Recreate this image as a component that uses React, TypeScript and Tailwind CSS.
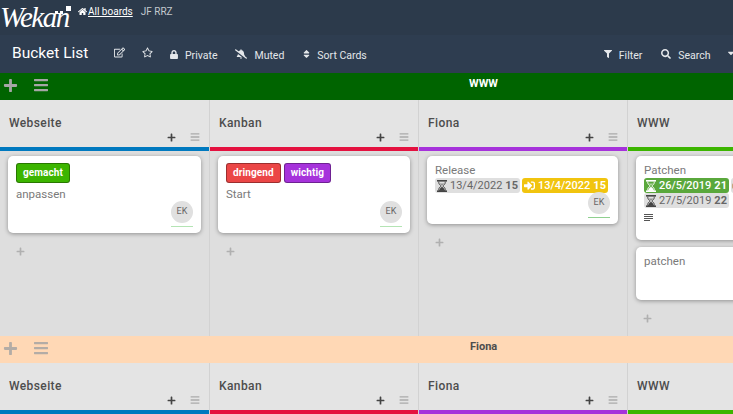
import { FaBars, FaBellSlash, FaCaretDown, FaFilter, FaHome, FaLock, FaPlus, FaRegEdit, FaRegStar, FaSearch, FaSignInAlt, FaSort } from "react-icons/fa";
import { ReactNode } from "react";

type ListProps = {
  title: string;
  stripe: string;
  width: string;
  children?: ReactNode;
  showActions?: boolean;
};

const Hourglass = ({ className }: { className: string }) => (
  <svg viewBox="0 0 10 12" className={`w-[10px] h-[12px] shrink-0 ${className}`} fill="currentColor">
    <rect x="0" y="0" width="10" height="1.6" />
    <rect x="0" y="10.4" width="10" height="1.6" />
    <path d="M1.8 1.6V3C1.8 4.8 4.2 5.3 4.2 6C4.2 6.7 1.8 7.2 1.8 9V10.4H8.2V9C8.2 7.2 5.8 6.7 5.8 6C5.8 5.3 8.2 4.8 8.2 3V1.6" fill="none" stroke="currentColor" strokeWidth="0.9" />
    <path d="M5 6.6C4.4 7.6 2.6 8 2.4 10.4H7.6C7.4 8 5.6 7.6 5 6.6Z" />
    <path d="M2.9 3.4H7.1C6.6 4.4 5.4 4.8 5 5.6C4.6 4.8 3.4 4.4 2.9 3.4Z" opacity="0.5" />
  </svg>
);

const Member = ({ line }: { line: string }) => (
  <div className="absolute right-[8px] bottom-[6px] flex flex-col items-center w-[22px]">
    <div className="w-[22px] h-[22px] rounded-full bg-[#e0e0e0] flex items-center justify-center text-[9px] text-[#666]">EK</div>
    <div className={`h-px w-[22px] mt-[3px] ${line}`} />
  </div>
);

const List = ({ title, stripe, width, children, showActions = true }: ListProps) => (
  <div className={`${width} shrink-0 flex flex-col border-r border-[#d2d2d2]`}>
    <div className="h-[47px] bg-[#e4e4e4] relative">
      <h2 className="pl-[9px] pt-[15px] text-[12px] leading-[16px] font-medium text-[#4d4d4d] tracking-[0.4px]">{title}</h2>
      {showActions && (
        <div className="absolute right-[9px] top-[32px] flex items-center gap-[14px]">
          <FaPlus className="w-[9px] h-[9px] text-[#444]" />
          <FaBars className="w-[10px] h-[10px] text-[#aaa]" />
        </div>
      )}
    </div>
    <div className={`h-[4px] ${stripe}`} />
    {children}
  </div>
);

const Card = ({ children, className }: { children: ReactNode; className: string }) => (
  <div className={`bg-white rounded-[5px] shadow-[0_1px_4px_rgba(0,0,0,0.35)] ${className}`}>{children}</div>
);

const Label = ({ text, color }: { text: string; color: string }) => (
  <span className={`h-[20px] px-[6px] rounded-[3px] border border-[#00000055] text-white text-[10px] tracking-[0.1px] font-bold leading-[18px] ${color}`}>{text}</span>
);

const AddCard = () => <FaPlus className="w-[9px] h-[9px] text-[#b0b0b0] ml-[16px]" />;

const Swimlane = ({ title, bg, text, icons }: { title: string; bg: string; text: string; icons: string }) => (
  <div className={`h-[27px] ${bg} flex items-start relative shrink-0`}>
    <div className={`flex items-center gap-[15px] pl-[3px] pt-[4px] ${icons}`}>
      <FaPlus className="w-[15px] h-[15px]" />
      <FaBars className="w-[16px] h-[16px]" />
    </div>
    <span className={`absolute top-[4px] text-[11px] leading-[14px] font-bold ${text}`}>{title}</span>
  </div>
);

const DateBadge = ({ icon, text, num, className }: { icon: ReactNode; text: string; num: string; className: string }) => (
  <span className={`inline-flex items-center gap-[3px] h-[15px] px-[2px] rounded-[3px] text-[11px] leading-[15px] whitespace-nowrap ${className}`}>
    {icon}
    <span>{text}</span>
    <b className="font-bold">{num}</b>
  </span>
);

const ListsTop = () => (
  <div className="h-[236px] flex bg-[#dedede] overflow-hidden shrink-0">
    <List title="Webseite" stripe="bg-[#0079bf]" width="w-[210px]">
      <Card className="mx-[8px] mt-[5px] h-[77px] px-[8px] pt-[7px] relative">
        <div className="flex"><Label text="gemacht" color="bg-[#3cb500]" /></div>
        <p className="text-[11.5px] leading-[16px] mt-[3px] text-[#7a7a7a]">anpassen</p>
        <Member line="bg-[#b4e4b4]" />
      </Card>
      <div className="mt-[14px]"><AddCard /></div>
    </List>
    <List title="Kanban" stripe="bg-[#e4113f]" width="w-[209px]">
      <Card className="mx-[8px] mt-[5px] h-[77px] px-[8px] pt-[7px] relative">
        <div className="flex gap-[3px]">
          <Label text="dringend" color="bg-[#eb4646]" />
          <Label text="wichtig" color="bg-[#a632db]" />
        </div>
        <p className="text-[11.5px] leading-[16px] mt-[3px] text-[#7a7a7a]">Start</p>
        <Member line="bg-[#b4e4b4]" />
      </Card>
      <div className="mt-[14px]"><AddCard /></div>
    </List>
    <List title="Fiona" stripe="bg-[#a632db]" width="w-[209px]">
      <Card className="ml-[8px] mr-[9px] mt-[5px] h-[68px] px-[8px] pt-[6px] relative">
        <p className="text-[11.5px] leading-[16px] text-[#7a7a7a]">Release</p>
        <div className="flex gap-[2px]">
          <DateBadge className="bg-[#dfdfdf] text-[#666]" icon={<Hourglass className="text-[#444]" />} text="13/4/2022" num="15" />
          <DateBadge className="bg-[#f1c40f] text-white font-medium" icon={<FaSignInAlt className="w-[11px] h-[11px]" />} text="13/4/2022" num="15" />
        </div>
        <Member line="bg-[#8fd08f]" />
      </Card>
      <div className="mt-[14px]"><AddCard /></div>
    </List>
    <List title="WWW" stripe="bg-[#3cb500]" width="w-[209px]" showActions={false}>
      <Card className="ml-[8px] w-[193px] mt-[5px] h-[84px] px-[8px] pt-[6px]">
        <p className="text-[11.5px] leading-[16px] text-[#7a7a7a]">Patchen</p>
        <div className="flex gap-[2px]">
          <DateBadge className="bg-[#5aa83c] text-white font-medium" icon={<Hourglass className="text-white" />} text="26/5/2019" num="21" />
          <span className="w-[10px] h-[15px] rounded-l-[3px] bg-[#dfdfdf] shrink-0 flex items-center pl-[1px]">
            <span className="w-[3px] h-[6px] rounded-l-[2px] bg-[#c9a27a]" />
          </span>
        </div>
        <div className="flex">
          <DateBadge className="bg-[#dfdfdf] text-[#666]" icon={<Hourglass className="text-[#444]" />} text="27/5/2019" num="22" />
        </div>
        <svg width="9" height="8" viewBox="0 0 9 8" className="mt-[6px] text-[#555]" fill="currentColor">
          <rect y="0" width="9" height="1" /><rect y="2" width="9" height="1" /><rect y="4" width="9" height="1" /><rect y="6" width="6" height="1" />
        </svg>
      </Card>
      <Card className="ml-[8px] w-[193px] mt-[7px] h-[53px] px-[8px] pt-[6px]">
        <p className="text-[11.5px] leading-[16px] text-[#7a7a7a]">patchen</p>
      </Card>
      <div className="mt-[14px] -ml-[1px]"><AddCard /></div>
    </List>
  </div>
);

const ListsBottom = () => (
  <div className="flex-1 flex bg-[#dedede] overflow-hidden">
    <List title="Webseite" stripe="bg-[#0079bf]" width="w-[210px]" />
    <List title="Kanban" stripe="bg-[#e4113f]" width="w-[209px]" />
    <List title="Fiona" stripe="bg-[#a632db]" width="w-[209px]" />
    <List title="WWW" stripe="bg-[#3cb500]" width="w-[209px]" showActions={false} />
  </div>
);

const HeaderButton = ({ icon, text, className }: { icon: ReactNode; text: string; className: string }) => (
  <div className={`flex items-center gap-[7px] whitespace-nowrap shrink-0 ${className}`}>
    {icon}
    <span className="text-[10.5px] leading-[14px] mt-[3px] text-[#e4e7ea]">{text}</span>
  </div>
);

export default function App() {
  return (
    <div className="w-[733px] h-[414px] overflow-hidden flex flex-col font-['Roboto',sans-serif]">
      {/** top bar */}
      <div className="h-[35px] bg-[#2c3a4b] flex items-start shrink-0 relative">
        <div className="w-[78px] h-[34px] relative">
          <span className="absolute left-0 top-[1px] font-['Liberation_Serif',serif] italic text-[29px] leading-[32px] text-white tracking-[-1.5px]">Wekan</span>
          <div className="absolute left-[66px] top-[6px] w-[5px] h-[5px] bg-white" />
          <div className="absolute left-[55px] top-[11px] w-[3px] h-[3px] bg-white" />
          <div className="absolute left-[60px] top-[11px] w-[3px] h-[3px] bg-white" />
        </div>
        <a className="flex items-center mt-[5px] text-[10px] leading-[13px] text-white">
          <FaHome className="w-[9px] h-[9px] mr-[1px]" />
          <span className="underline"> All boards</span>
        </a>
        <span className="ml-[8px] mt-[5px] text-[10px] leading-[13px] text-[#c3c9cf]">JF RRZ</span>
      </div>

      {/** board header */}
      <div className="h-[38px] bg-[#2e3d50] flex items-center shrink-0">
        <h1 className="ml-[12px] w-[102px] shrink-0 text-[15.5px] text-white font-normal">Bucket List</h1>
        <FaRegEdit className="w-[11px] h-[11px] shrink-0 mb-[3px] text-[#e4e7ea]" />
        <FaRegStar className="ml-[17px] w-[11px] h-[11px] shrink-0 mb-[3px] text-[#e4e7ea]" />
        <HeaderButton className="ml-[17px]" icon={<FaLock className="w-[8px] h-[9px] text-[#e4e7ea]" />} text="Private" />
        <HeaderButton className="ml-[18px]" icon={<FaBellSlash className="w-[12px] h-[12px] text-[#e4e7ea]" />} text="Muted" />
        <HeaderButton className="ml-[19px]" icon={<FaSort className="w-[7px] h-[10px] text-[#e4e7ea]" />} text="Sort Cards" />
        <HeaderButton className="ml-[237px]" icon={<FaFilter className="w-[8px] h-[8px] text-[#e4e7ea]" />} text="Filter" />
        <HeaderButton className="ml-[19px]" icon={<FaSearch className="w-[10px] h-[10px] text-[#e4e7ea]" />} text="Search" />
        <FaCaretDown className="ml-[15px] mb-[3px] w-[10px] h-[10px] shrink-0 text-[#e4e7ea]" />
      </div>

      <Swimlane title="WWW" bg="bg-[#006400]" text="text-white left-[469px]" icons="text-[#a6a6a6]" />
      <ListsTop />
      <Swimlane title="Fiona" bg="bg-[#ffd8b5]" text="text-[#4d4d4d] left-[470px]" icons="text-[#b3aca6]" />
      <ListsBottom />
    </div>
  );
}
